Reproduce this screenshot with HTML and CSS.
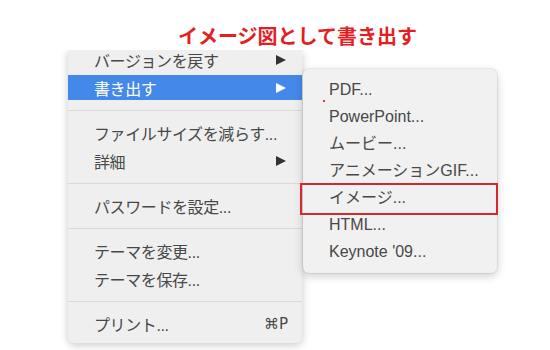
FILE: index.html
```html
<!DOCTYPE html>
<html lang="ja">

<head>
    <meta charset="UTF-8">
    <title>イメージ図として書き出す</title>
    <link rel="stylesheet" href="styles.css">
</head>

<body>

    <h1 class="title">イメージ図として書き出す</h1>

    <div class="menus">
        <!-- メインメニュー（上部は切り取り） -->
        <div class="menu main">
            <div class="item first">バージョンを戻す<span class="arrow"></span></div>
            <div class="item active">書き出す<span class="arrow"></span></div>
            <div class="sep"></div>
            <div class="item">ファイルサイズを減らす...</div>
            <div class="item">詳細<span class="arrow"></span></div>
            <div class="sep"></div>
            <div class="item">パスワードを設定...</div>
            <div class="sep"></div>
            <div class="item">テーマを変更...</div>
            <div class="item">テーマを保存...</div>
            <div class="sep"></div>
            <div class="item">プリント...<span class="key">⌘P</span></div>
        </div>

        <!-- サブメニュー -->
        <div class="menu sub">
            <span class="dot"></span>
            <div class="item">PDF...</div>
            <div class="item">PowerPoint...</div>
            <div class="item">ムービー...</div>
            <div class="item">アニメーションGIF...</div>
            <div class="item marked">イメージ...</div>
            <div class="item">HTML...</div>
            <div class="item">Keynote '09...</div>
        </div>
    </div>

</body>

</html>
```

FILE: styles.css
```css
* {
    margin: 0px;
    padding: 0px;
    box-sizing: border-box;
}

body {
    width: 550px;
    height: 350px;
    background-color: #fff;
    font-family: "Liberation Sans", "Noto Sans CJK JP", sans-serif;
    overflow: hidden;
}

.title {
    height: 50px;
    padding: 24px 0 0 178px;
    font-family: "Noto Sans CJK JP", sans-serif;
    font-size: 20px;
    font-weight: 700;
    line-height: 24px;
    color: #e3201f;
}

.menus {
    display: flex;
    align-items: flex-start;
    padding-left: 68px;
}

.menu {
    display: flex;
    flex-direction: column;
    font-size: 16px;
    color: #484848;
}

/* メインメニュー */
.main {
    width: 234px;
    height: 293px;
    padding-bottom: 4px;
    background-color: #efefef;
    border-radius: 0 0 6px 6px;
    box-shadow: 0 2px 9px rgba(0, 0, 0, 0.22);
    clip-path: inset(0 -20px -20px -20px);
}

.main .item {
    display: flex;
    align-items: center;
    justify-content: space-between;
    height: 25px;
    margin-bottom: 3px;
    padding: 0 16px 0 26px;
    letter-spacing: -0.4px;
    white-space: nowrap;
}

.main .first {
    margin-top: -3px;
}

.main .active {
    background-color: #4489ea;
    color: #fff;
}

.arrow {
    width: 0;
    height: 0;
    border-left: 10px solid #333;
    border-top: 5px solid transparent;
    border-bottom: 5px solid transparent;
}

.active .arrow {
    border-left-color: #fff;
}

.key {
    margin-right: -2px;
    font-family: "DejaVu Sans", sans-serif;
    font-size: 15px;
    letter-spacing: 0;
}

.sep {
    height: 1px;
    margin: 7px 0 9px;
    background-color: #d9d9d9;
}

/* サブメニュー */
.sub {
    position: relative;
    width: 194px;
    height: 204px;
    margin: 19px 0 0 1px;
    padding: 7px 0 8px;
    background-color: #f1f1f1;
    border-radius: 6px;
    box-shadow: 0 0 0 1px rgba(0, 0, 0, 0.06), 0 3px 10px rgba(0, 0, 0, 0.2);
}

.sub .item {
    position: relative;
    height: 27px;
    padding-left: 26px;
    line-height: 27px;
    white-space: nowrap;
}

/* 赤枠 */
.sub .marked::after {
    content: "";
    position: absolute;
    top: -1px;
    bottom: -4px;
    left: -3px;
    right: -1px;
    border: 2px solid #d42a2c;
}

.dot {
    position: absolute;
    top: 31px;
    left: 20px;
    width: 2px;
    height: 2px;
    background-color: #d8343a;
}
```
